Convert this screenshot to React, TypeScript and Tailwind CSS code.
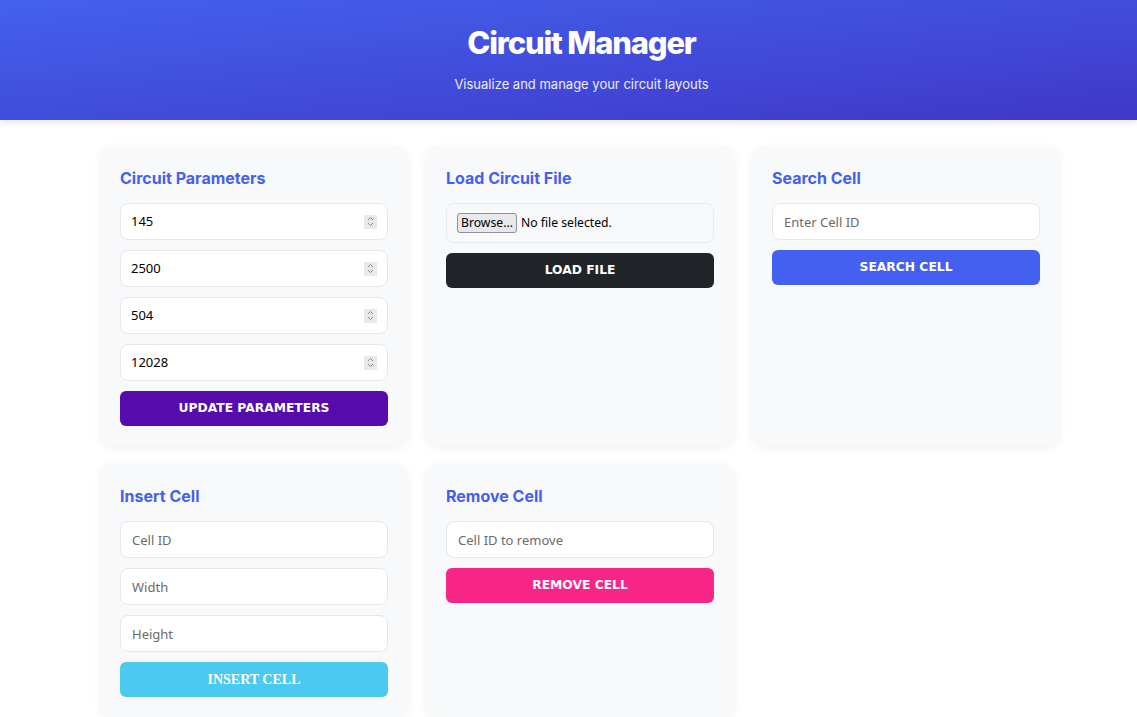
import React from "react";

const inputBox =
  "h-[37px] w-full rounded-lg border border-[#e5e7eb] bg-white px-[11px] text-[13px] text-black placeholder:text-[#6b6b6b] outline-none";

function Spinner() {
  return (
    <div className="flex h-[14px] w-[13px] items-center justify-center bg-[#e9e9ed]">
      <svg width="7" height="11" viewBox="0 0 7 11" fill="none" stroke="#8a8a8a" strokeWidth="1">
        <path d="M1 4 L3.5 1.5 L6 4" />
        <path d="M1 7 L3.5 9.5 L6 7" />
      </svg>
    </div>
  );
}

function NumberField({ value }: { value: string }) {
  return (
    <div className="flex h-[37px] w-full items-center rounded-lg border border-[#e5e7eb] bg-white pl-[10px] pr-[10px]">
      <input
        type="text"
        defaultValue={value}
        className="min-w-0 flex-1 bg-transparent text-[13px] text-black outline-none"
      />
      <Spinner />
    </div>
  );
}

function Card({ title, children }: { title: string; children: React.ReactNode }) {
  return (
    <div className="flex flex-col rounded-xl bg-[#f8f9fa] p-5 shadow-[0_2px_8px_rgba(0,0,0,0.06)]">
      <h2 className="mt-[1px] mb-[14px] font-['Inter'] text-[16px] leading-[22px] font-bold text-[#4361ee]">{title}</h2>
      <div className="flex flex-col gap-[10px]">{children}</div>
    </div>
  );
}

function Btn({ label, color, serif }: { label: string; color: string; serif?: boolean }) {
  return (
    <button
      className={`h-[35px] w-full rounded-md font-bold text-white ${color} ${
        serif ? "font-['Liberation_Serif'] text-[14px]" : "font-['DejaVu_Sans'] text-[12.3px]"
      }`}
    >
      {label}
    </button>
  );
}

export default function App() {
  return (
    <div className="min-h-screen bg-white font-['Noto_Sans',sans-serif]">
      <header className="flex h-[120px] flex-col items-center bg-gradient-to-br from-[#4361ee] to-[#3f37c9] pl-[26px] shadow-[0_2px_8px_rgba(0,0,0,0.12)]">
        <h1 className="mt-[25px] font-['Inter'] text-[31px] leading-[36px] font-extrabold tracking-[-1.2px] text-white">
          Circuit Manager
        </h1>
        <p className="mt-[13px] font-['Inter'] text-[13px] leading-[20px] text-white/90">
          Visualize and manage your circuit layouts
        </p>
      </header>

      <main className="grid grid-cols-[repeat(3,308px)] gap-[18px] pt-[26px] pl-[100px]">
        <Card title="Circuit Parameters">
          <NumberField value="145" />
          <NumberField value="2500" />
          <NumberField value="504" />
          <NumberField value="12028" />
          <Btn label="UPDATE PARAMETERS" color="bg-[#560bad]" />
        </Card>

        <Card title="Load Circuit File">
          <div className="flex h-[40px] items-center gap-[4px] rounded-lg border border-[#e9ecef] bg-[#f8f9fa] px-[10px] text-[12.2px] text-black">
            <span className="rounded-[3px] border border-[#8f8f9d] bg-[#e9e9ed] px-[3px] leading-[18px]">Browse...</span>
            <span>No file selected.</span>
          </div>
          <Btn label="LOAD FILE" color="bg-[#212529]" />
        </Card>

        <Card title="Search Cell">
          <input className={inputBox} placeholder="Enter Cell ID" />
          <Btn label="SEARCH CELL" color="bg-[#4361ee]" />
        </Card>

        <Card title="Insert Cell">
          <input className={inputBox} placeholder="Cell ID" />
          <input className={inputBox} placeholder="Width" />
          <input className={inputBox} placeholder="Height" />
          <Btn label="INSERT CELL" color="bg-[#4cc9f0]" serif />
        </Card>

        <Card title="Remove Cell">
          <input className={inputBox} placeholder="Cell ID to remove" />
          <Btn label="REMOVE CELL" color="bg-[#f72585]" />
        </Card>
      </main>
    </div>
  );
}
